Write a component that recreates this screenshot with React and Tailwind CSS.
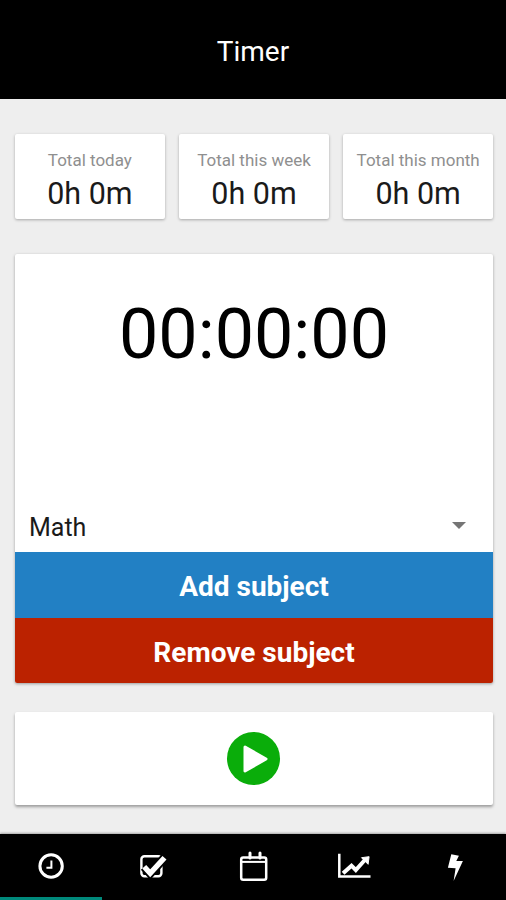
import React from 'react';

const totals = [
  { label: 'Total today', value: '0h 0m' },
  { label: 'Total this week', value: '0h 0m' },
  { label: 'Total this month', value: '0h 0m' },
];

const ClockIcon = () => (
  <svg width="34" height="34" viewBox="0 0 34 34" fill="none" stroke="white">
    <circle cx="17.1" cy="17" r="11.2" strokeWidth="3" />
    <path d="M17.4 11.5 V18.8 H12.4" strokeWidth="2" />
  </svg>
);

const CheckIcon = () => (
  <svg width="34" height="34" viewBox="0 0 34 34" fill="none" stroke="white">
    <rect x="6.4" y="7.2" width="20" height="20" rx="3" strokeWidth="2.4" />
    <path d="M9.2 17.7 L15.2 24.3 L29.5 8.7" stroke="black" strokeWidth="9" />
    <path d="M9.2 17.7 L15.2 24.3 L29.5 8.7" strokeWidth="5.4" />
  </svg>
);

const CalendarIcon = () => (
  <svg width="34" height="34" viewBox="0 0 34 34" fill="none" stroke="white">
    <rect x="5.2" y="8.5" width="25" height="22.2" rx="2" strokeWidth="2.5" />
    <path d="M5.2 12.9 H30.2" strokeWidth="2" />
    <path d="M14 4 V9 M24 4 V9" strokeWidth="3" strokeLinecap="round" />
  </svg>
);

const ChartIcon = () => (
  <svg width="34" height="34" viewBox="0 0 34 34" fill="none" stroke="white">
    <path d="M2.3 4.7 V27.5 H33.5" strokeWidth="2.5" />
    <path d="M6.1 24.3 L14.5 16.7 L18.8 21 L27.8 11" strokeWidth="4" />
    <path d="M24.5 8.7 L32.1 7.7 L31.1 15.3 Z" fill="white" strokeWidth="1" />
  </svg>
);

const BoltIcon = () => (
  <svg width="34" height="34" viewBox="0 0 34 34" fill="white">
    <path d="M13.3 5.3 L20.9 6.7 L18.3 12 L24.9 12 L15.6 32 L17.6 19.3 L9.9 18.7 Z" />
  </svg>
);

const tabs = [<ClockIcon />, <CheckIcon />, <CalendarIcon />, <ChartIcon />, <BoltIcon />];

const App = () => {
  return (
    <div className="flex flex-col h-[900px] w-[506px] overflow-hidden bg-[#eeeeee] font-['Roboto',sans-serif]">
      <div className="flex h-[99px] shrink-0 items-center justify-center bg-black pt-[4px] text-[28px] text-white">
        Timer
      </div>

      <div className="flex flex-1 flex-col pl-[15px] pr-[13px] pt-[35px]">
        <div className="flex gap-[14.5px]">
          {totals.map((t) => (
            <div
              key={t.label}
              className="flex h-[85px] flex-1 flex-col items-center rounded-[2px] bg-white pt-[17px] shadow-[0_1px_3px_rgba(0,0,0,0.3)]"
            >
              <div className="text-[17px] leading-[19px] text-[#8f8f8f]">{t.label}</div>
              <div className="mt-[7px] text-[30.5px] leading-[34px] text-[#1a1a1a]">{t.value}</div>
            </div>
          ))}
        </div>

        <div className="mt-[35px] flex flex-col rounded-[2px] bg-white shadow-[0_1px_3px_rgba(0,0,0,0.35)]">
          <div className="flex h-[244px] justify-center pt-[38px] text-[70px] leading-[84px] text-black">
            00:00:00
          </div>
          <div className="flex h-[54px] items-center justify-between pl-[14px] pr-[27px]">
            <span className="pt-[6px] text-[25px] leading-[28px] text-[#1a1a1a]">Math</span>
            <span className="h-0 w-0 border-x-[7px] border-t-[7px] border-x-transparent border-t-[#757575]"></span>
          </div>
          <div className="flex h-[66px] items-center justify-center bg-[#2280c4] pt-[3px] text-[28px] font-bold text-white">
            Add subject
          </div>
          <div className="flex h-[65px] items-center justify-center rounded-b-[2px] bg-[#bb2200] pt-[5px] text-[28px] font-bold text-white">
            Remove subject
          </div>
        </div>

        <div className="mt-[29px] flex h-[93px] items-center justify-center rounded-[2px] bg-white shadow-[0_2px_3px_rgba(0,0,0,0.35)]">
          <div className="mr-[2px] flex h-[53px] w-[53px] items-center justify-center rounded-full bg-[#0aad0a]">
            <svg width="26" height="30" viewBox="0 0 26 30" className="ml-[5px]">
              <path d="M2 3 L23 15 L2 27 Z" fill="white" stroke="white" strokeWidth="3" strokeLinejoin="round" />
            </svg>
          </div>
        </div>
      </div>

      <div className="relative flex h-[66px] shrink-0 items-center bg-black pb-[2px] shadow-[0_-1px_2px_rgba(0,0,0,0.3)]">
        {tabs.map((icon, i) => (
          <div key={i} className="flex flex-1 items-center justify-center">
            {icon}
          </div>
        ))}
        <div className="absolute bottom-0 left-0 h-[3px] w-[102px] bg-[#00897b]"></div>
      </div>
    </div>
  );
};

export default App;
